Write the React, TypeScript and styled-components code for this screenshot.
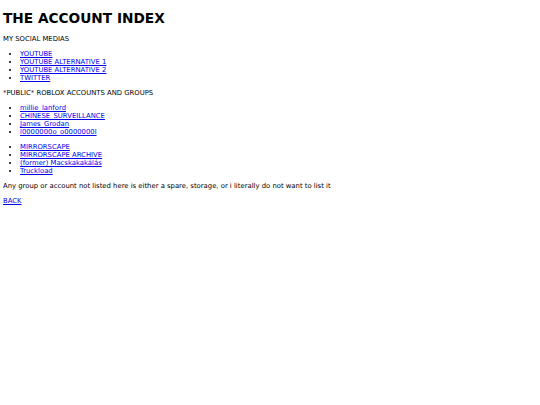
import React from "react";
import styled, { createGlobalStyle } from "styled-components";

const Global = createGlobalStyle`
  html, body {
    margin: 0;
    background: #fff;
  }
  body {
    padding: 0 3px;
    font-family: "DejaVu Sans", Verdana, sans-serif;
    font-size: 6.85px;
    line-height: 8px;
    color: #000;
  }
`;

const Page = styled.div`
  display: block;
`;

const Title = styled.h1`
  margin: 10px 0 9px;
  font-size: 13.7px;
  line-height: 16px;
  font-weight: bold;
`;

const Para = styled.p`
  margin: 7px 0;
`;

const List = styled.ul`
  margin: 7px 0;
  padding-left: 17px;
  list-style: disc;
`;

const A = styled.a`
  color: #0000ee;
  text-decoration: underline;
`;

const social = ["YOUTUBE", "YOUTUBE ALTERNATIVE 1", "YOUTUBE ALTERNATIVE 2", "TWITTER"];
const accounts = ["millie_lanford", "CHINESE_SURVEILLANCE", "James_Grodan", "l0000000o_o0000000l"];
const groups = ["MIRRORSCAPE", "MIRRORSCAPE ARCHIVE", "(former) Macskakakálás", "Truckload"];

export default function App() {
  return (
    <Page>
      <Global />
      <Title>THE ACCOUNT INDEX</Title>
      <Para>MY SOCIAL MEDIAS</Para>
      <List>
        {social.map((s) => (
          <li key={s}>
            <A href="#">{s}</A>
          </li>
        ))}
      </List>
      <Para>*PUBLIC* ROBLOX ACCOUNTS AND GROUPS</Para>
      <List>
        {accounts.map((s) => (
          <li key={s}>
            <A href="#">{s}</A>
          </li>
        ))}
      </List>
      <List>
        {groups.map((s) => (
          <li key={s}>
            <A href="#">{s}</A>
          </li>
        ))}
      </List>
      <Para>Any group or account not listed here is either a spare, storage, or i literally do not want to list it</Para>
      <Para>
        <A href="#">BACK</A>
      </Para>
    </Page>
  );
}
